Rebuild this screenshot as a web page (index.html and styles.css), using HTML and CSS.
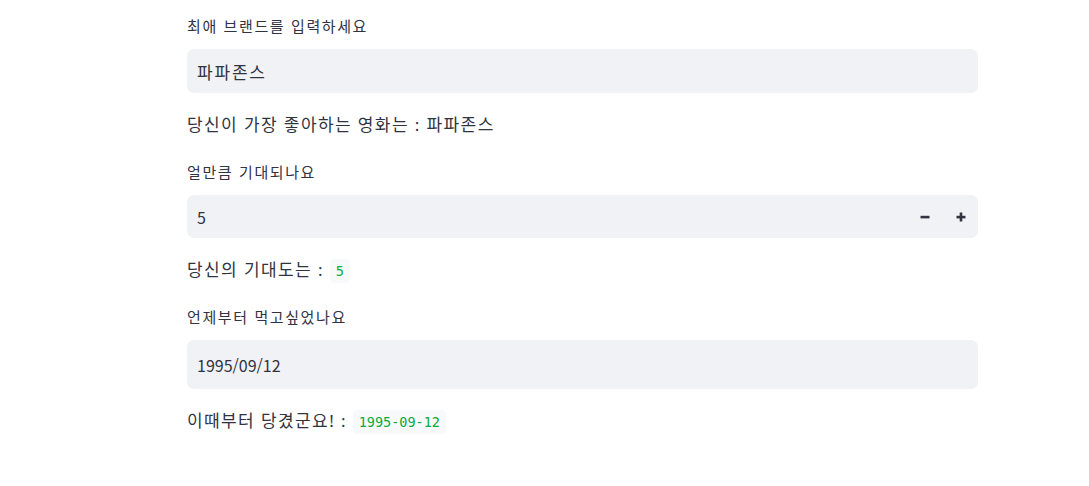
FILE: index.html
```html
<!DOCTYPE html>
<html lang="ko">
<head>
    <meta charset="UTF-8">
    <title>Streamlit</title>
    <link rel="stylesheet" href="styles.css">
</head>
<body>
    <main class="block">
        <label class="label">최애 브랜드를 입력하세요</label>
        <div class="field field-text">파파존스</div>
        <p class="md">당신이 가장 좋아하는 영화는 : 파파존스</p>

        <label class="label">얼만큼 기대되나요</label>
        <div class="field field-number">
            <span class="value">5</span>
            <span class="steps">
                <svg class="step" width="12" height="12" viewBox="0 0 12 12"><rect x="1.5" y="4.8" width="9" height="2.6" fill="#31333f"/></svg>
                <svg class="step" width="12" height="12" viewBox="0 0 12 12"><rect x="1.5" y="4.8" width="9" height="2.6" fill="#31333f"/><rect x="4.7" y="1.5" width="2.6" height="9" fill="#31333f"/></svg>
            </span>
        </div>
        <p class="md">당신의 기대도는 : <code>5</code></p>

        <label class="label">언제부터 먹고싶었나요</label>
        <div class="field field-date">1995/09/12</div>
        <p class="md">이때부터 당겼군요! : <code>1995-09-12</code></p>
    </main>
</body>
</html>
```

FILE: styles.css
```css
* {
    margin: 0;
    padding: 0;
    box-sizing: border-box;
}

body {
    font-family: "Noto Sans CJK KR", "Noto Sans", sans-serif;
    background-color: #fff;
    color: #31333f;
}

.block {
    width: 791px;
    margin-left: 187px;
    padding-top: 16px;
    display: flex;
    flex-direction: column;
}

.label {
    display: block;
    font-size: 15px;
    letter-spacing: 1.6px;
    line-height: 20px;
    height: 20px;
    margin-bottom: 13px;
}

.field {
    background-color: #f0f2f6;
    border-radius: 7px;
    padding-left: 10px;
    display: flex;
    align-items: center;
    margin-bottom: 20px;
}

.field-text {
    height: 44px;
    font-size: 17px;
    letter-spacing: 1.8px;
}

.field-number {
    height: 43px;
    font-size: 16px;
    justify-content: space-between;
}

.field-date {
    height: 49px;
    font-size: 16px;
}

.steps {
    display: flex;
    align-items: center;
    gap: 24px;
    padding-right: 11px;
}

.step {
    display: block;
}

/* latin face first so the colon stays narrow */
.md {
    font-family: "Noto Sans", "Noto Sans CJK KR", sans-serif;
    font-size: 17px;
    letter-spacing: 1.4px;
    line-height: 24px;
    height: 24px;
    margin-bottom: 25px;
}

code {
    font-family: "DejaVu Sans Mono", monospace;
    font-size: 13.5px;
    letter-spacing: 0;
    color: #09ab3b;
    background-color: #f8f9fb;
    border-radius: 4px;
    padding: 4px 6px;
}
```
